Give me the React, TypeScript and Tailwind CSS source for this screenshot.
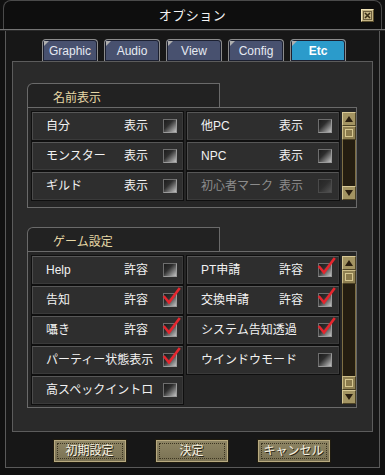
import React from "react";

type CellProps = {
  label?: string;
  sub?: string;
  checked?: boolean;
  disabled?: boolean;
  empty?: boolean;
};

function Check({ checked, disabled }: { checked?: boolean; disabled?: boolean }) {
  return (
    <div
      className={
        "relative w-[14px] h-[14px] border " +
        (disabled
          ? "border-[#4a4a4a] bg-[linear-gradient(135deg,#262626_0%,#2e2e2e_45%,#555555_100%)]"
          : "border-t-[#6e6e6e] border-l-[#6e6e6e] border-r-[#9a9a9a] border-b-[#9a9a9a] bg-[linear-gradient(135deg,#1c1c1c_0%,#2e2e2e_38%,#c4c4c4_100%)]")
      }
    >
      {checked && (
        <svg
          className="absolute left-[-1px] top-[-7px] w-[18px] h-[18px] overflow-visible"
          viewBox="0 0 18 18"
        >
          <path
            d="M1.5 10 L6 15.5 L16 2"
            stroke="#e5262e"
            strokeWidth="2.6"
            fill="none"
            strokeLinejoin="miter"
            strokeLinecap="square"
          />
        </svg>
      )}
    </div>
  );
}

function Cell({ label, sub, checked, disabled, empty }: CellProps) {
  if (empty) return <div className="h-[28px]" />;
  const color = disabled ? "text-[#8c8c8c]" : "text-[#f2f2f2]";
  return (
    <div className="h-[28px] grid grid-cols-[78px_39px_14px] items-center pl-[13px] bg-[#2e2e2e] border border-t-[#575757] border-l-[#4c4c4c] border-r-[#3a3a3a] border-b-[#3a3a3a] shadow-[0_0_0_1px_#0f0f0f]">
      {sub ? (
        <>
          <span className={"whitespace-nowrap " + color}>{label}</span>
          <span className={"whitespace-nowrap " + color}>{sub}</span>
        </>
      ) : (
        <span className={"col-span-2 whitespace-nowrap " + color}>{label}</span>
      )}
      <Check checked={checked} disabled={disabled} />
    </div>
  );
}

function Tri({ up }: { up?: boolean }) {
  return (
    <svg width="8" height="6" viewBox="0 0 8 6">
      <path d={up ? "M4 0 L8 6 L0 6 Z" : "M0 0 L8 0 L4 6 Z"} fill="#2a1f10" />
    </svg>
  );
}

function SBtn({ up }: { up?: boolean }) {
  return (
    <div className="h-[14px] flex items-center justify-center bg-[#a39462] border border-t-[#d8c996] border-l-[#d8c996] border-r-[#4e4426] border-b-[#4e4426]">
      <Tri up={up} />
    </div>
  );
}

function Thumb() {
  return (
    <div className="h-[14px] flex items-center justify-center bg-[#8f8052] border border-t-[#cdbd88] border-l-[#cdbd88] border-r-[#4a4024] border-b-[#4a4024]">
      <div className="w-[8px] h-[8px] border border-[#d6c790] bg-[#8a7a4c]" />
    </div>
  );
}

function Scroll({ double }: { double?: boolean }) {
  return (
    <div className="w-[15px] ml-[3px] flex flex-col">
      <SBtn up />
      <Thumb />
      <div className="flex-1 bg-[#241d10] border-x border-[#7e6f44]" />
      {double && <Thumb />}
      <SBtn />
    </div>
  );
}

function Section({
  title,
  cells,
  double,
  pb,
}: {
  title: string;
  cells: CellProps[];
  double?: boolean;
  pb: string;
}) {
  return (
    <div className="flex flex-col">
      <div className="w-[193px] h-[24px] border-t border-x border-[#6a6a6a] rounded-tl-[6px] bg-[#222222] flex items-center pl-[25px] pt-[4px] text-[#e6d8a6]">
        {title}
      </div>
      <div className={"w-[330px] border border-[#6a6a6a] bg-[#252525] flex pl-[4px] pt-[4px] " + pb}>
        <div className="grid grid-cols-[151px_152px] gap-x-[4px] gap-y-[2px]">
          {cells.map((c, i) => (
            <Cell key={i} {...c} />
          ))}
        </div>
        <Scroll double={double} />
      </div>
    </div>
  );
}

function Tab({ label, active }: { label: string; active?: boolean }) {
  return (
    <div
      className={
        "relative w-[56px] h-[22px] border border-b-0 border-[#8c8c8c] rounded-t-[4px] flex items-center justify-center shadow-[inset_0_0_0_1px_#1c2030] " +
        (active
          ? "bg-[#2b9bcb] text-white font-bold"
          : "bg-[#48516f] text-[#e6eaf2]")
      }
    >
      <div className="absolute left-[1px] top-[1px] w-0 h-0 border-t-[5px] border-r-[5px] border-t-[#b0b0b0] border-r-transparent" />
      {label}
    </div>
  );
}

function Btn({ label }: { label: string }) {
  return (
    <div className="w-[72px] h-[22px] border border-[#b8aa80] bg-[linear-gradient(180deg,#8e8564_0%,#7a7254_100%)] p-[2px] shadow-[0_0_0_1px_#201c10]">
      <div className="w-full h-full border border-dotted border-[#3c3522] flex items-center justify-center text-[#f6f2e2] [text-shadow:1px_1px_0_#2a2416]">
        {label}
      </div>
    </div>
  );
}

export default function App() {
  const s1: CellProps[] = [
    { label: "自分", sub: "表示" },
    { label: "他PC", sub: "表示" },
    { label: "モンスター", sub: "表示" },
    { label: "NPC", sub: "表示" },
    { label: "ギルド", sub: "表示" },
    { label: "初心者マーク", sub: "表示", disabled: true },
  ];
  const s2: CellProps[] = [
    { label: "Help", sub: "許容" },
    { label: "PT申請", sub: "許容", checked: true },
    { label: "告知", sub: "許容", checked: true },
    { label: "交換申請", sub: "許容", checked: true },
    { label: "囁き", sub: "許容", checked: true },
    { label: "システム告知透過", checked: true },
    { label: "パーティー状態表示", checked: true },
    { label: "ウインドウモード" },
    { label: "高スペックイントロ" },
    { empty: true },
  ];
  return (
    <div className="w-[385px] h-[475px] bg-[#101010] text-[12px] leading-none font-['Liberation_Sans','Noto_Sans_CJK_JP',sans-serif] overflow-hidden">
      <div className="h-[29px] mx-[3px] border-t border-x border-[#4a4a4a] rounded-t-[8px] bg-[#0e0e0e] grid grid-cols-[1fr_auto_1fr] items-center">
        <div />
        <div className="text-[13px] text-[#f4f4f4] tracking-[0.5px]">オプション</div>
        <div className="flex justify-end pr-[7px]">
          <div className="w-[13px] h-[13px] bg-[#c4b484] border border-t-[#efe2b6] border-l-[#efe2b6] border-r-[#5a4e2c] border-b-[#5a4e2c] flex items-center justify-center">
            <svg width="9" height="9" viewBox="0 0 9 9">
              <rect x="0.5" y="0.5" width="8" height="8" fill="none" stroke="#6e6040" strokeWidth="1" />
              <path d="M2 2 L7 7 M7 2 L2 7" stroke="#3a2f18" strokeWidth="1.6" />
            </svg>
          </div>
        </div>
      </div>
      <div className="h-[2px] bg-[#737373] border-b border-[#2a2a2a]" />
      <div className="ml-[5px] w-[375px] h-[437px] border-x border-b border-[#595959] bg-[#171717] pt-[8px] flex flex-col">
        <div className="ml-[36px] flex gap-[6px]">
          <Tab label="Graphic" />
          <Tab label="Audio" />
          <Tab label="View" />
          <Tab label="Config" />
          <Tab label="Etc" active />
        </div>
        <div className="ml-[6px] w-[361px] h-[371px] border border-[#5c5c5c] bg-[#2a2a2a] pt-[21px] pl-[14px] flex flex-col gap-[19px]">
          <Section title="名前表示" cells={s1} pb="pb-[7px]" />
          <Section title="ゲーム設定" cells={s2} double pb="pb-[3px]" />
        </div>
        <div className="mt-[8px] flex justify-center gap-[30px] pr-[2px]">
          <Btn label="初期設定" />
          <Btn label="決定" />
          <Btn label="キャンセル" />
        </div>
      </div>
    </div>
  );
}
